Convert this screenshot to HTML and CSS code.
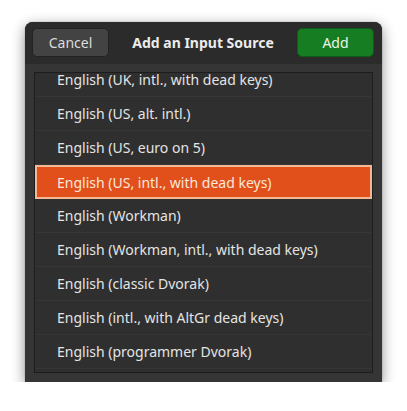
FILE: index.html
```html
<!DOCTYPE html>
<html>
<head>
<meta charset="utf-8">
<link rel="stylesheet" href="styles.css">
</head>
<body>
<div class="dialog">
  <div class="header">
    <button class="btn cancel">Cancel</button>
    <div class="title">Add an Input Source</div>
    <button class="btn add">Add</button>
  </div>
  <div class="body">
    <div class="list">
      <div class="row partial">English (UK, intl., with dead keys)</div>
      <div class="row">English (US, alt. intl.)</div>
      <div class="row">English (US, euro on 5)</div>
      <div class="row selected">English (US, intl., with dead keys)</div>
      <div class="row">English (Workman)</div>
      <div class="row">English (Workman, intl., with dead keys)</div>
      <div class="row">English (classic Dvorak)</div>
      <div class="row">English (intl., with AltGr dead keys)</div>
      <div class="row">English (programmer Dvorak)</div>
    </div>
  </div>
</div>
</body>
</html>
```
FILE: styles.css
```css
html, body {
  margin: 0;
  padding: 0;
  background: #ffffff;
}
body {
  font-family: "Noto Sans", "DejaVu Sans", sans-serif;
  font-size: 14px;
  color: #e6e6e6;
}
.dialog {
  margin: 22px 0 0 25px;
  width: 357px;
  height: 360px;
  border-radius: 8px 8px 0 0;
  background: #353535;
  box-shadow: 0 4px 14px rgba(0, 0, 0, 0.45), 0 0 1px rgba(0, 0, 0, 0.6);
  display: flex;
  flex-direction: column;
}
.header {
  height: 42px;
  box-sizing: border-box;
  padding: 6px 8px 7px 7px;
  background: #2b2b2b;
  border-radius: 8px 8px 0 0;
  display: flex;
  align-items: stretch;
  justify-content: space-between;
}
.btn {
  width: 77px;
  border-radius: 5px;
  font-family: inherit;
  font-size: 14px;
  padding: 0;
  cursor: pointer;
}
.cancel {
  background: #434343;
  border: 1px solid #232323;
  color: #dcdcdc;
}
.add {
  background: #167d22;
  border: 1px solid #0f5a17;
  color: #eaf5ea;
}
.title {
  align-self: center;
  font-weight: bold;
  color: #ececec;
}
.body {
  flex: 1;
  padding: 8px 9px 9px 9px;
  display: flex;
}
.list {
  flex: 1;
  border: 1px solid #1d1d1d;
  background: #2f2f2f;
}
.row {
  height: 34px;
  box-sizing: border-box;
  padding-left: 22px;
  display: flex;
  align-items: center;
  border-bottom: 1px solid #363636;
  color: #e4e4e4;
}
.row.partial {
  height: 24px;
  align-items: flex-start;
  line-height: 14px;
  padding-top: 0;
}
.row.selected {
  background: #e1501a;
  border: 2px solid #f5b895;
  padding-left: 20px;
  color: #fbe6da;
}
```
